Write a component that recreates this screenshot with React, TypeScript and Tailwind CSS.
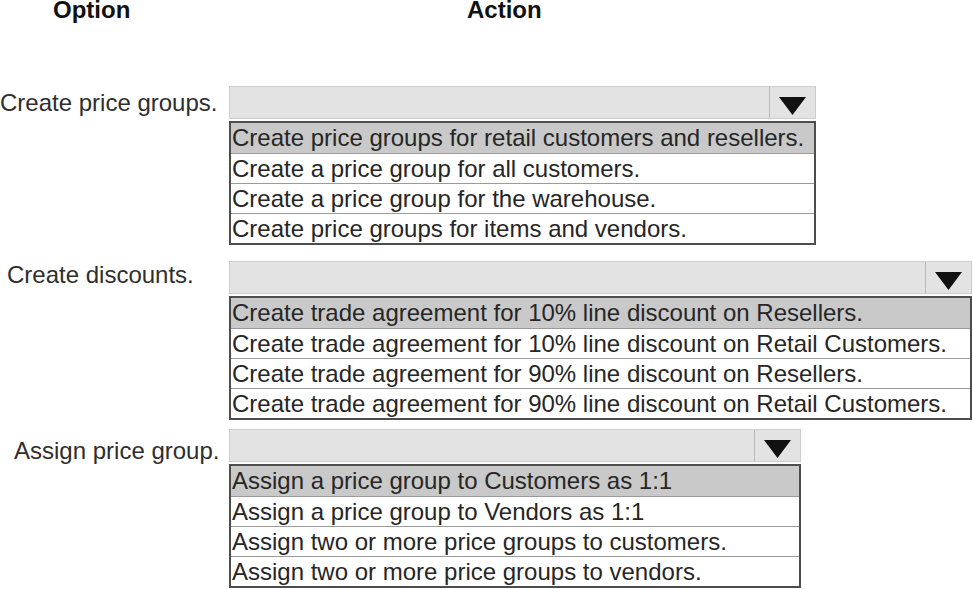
import React from "react";

type Group = {
  label: string;
  labelClass: string;
  boxClass: string;
  wrapClass: string;
  items: string[];
};

const groups: Group[] = [
  {
    label: "Create price groups.",
    labelClass: "pl-0 pt-0",
    boxClass: "w-[587px]",
    wrapClass: "mt-[66px]",
    items: [
      "Create price groups for retail customers and resellers.",
      "Create a price group for all customers.",
      "Create a price group for the warehouse.",
      "Create price groups for items and vendors.",
    ],
  },
  {
    label: "Create discounts.",
    labelClass: "pl-[7px] -mt-[3px]",
    boxClass: "w-[743px]",
    wrapClass: "mt-[16px]",
    items: [
      "Create trade agreement for 10% line discount on Resellers.",
      "Create trade agreement for 10% line discount on Retail Customers.",
      "Create trade agreement for 90% line discount on Resellers.",
      "Create trade agreement for 90% line discount on Retail Customers.",
    ],
  },
  {
    label: "Assign price group.",
    labelClass: "pl-[14px] pt-[5px]",
    boxClass: "w-[572px]",
    wrapClass: "mt-[9px]",
    items: [
      "Assign a price group to Customers as 1:1",
      "Assign a price group to Vendors as 1:1",
      "Assign two or more price groups to customers.",
      "Assign two or more price groups to vendors.",
    ],
  },
];

const Arrow: React.FC = () => (
  <svg width="27" height="18" viewBox="0 0 27 18">
    <polygon points="0,0 27,0 13.5,18" fill="#111" />
  </svg>
);

const Dropdown: React.FC<{ group: Group }> = ({ group }) => (
  <div className={`flex ${group.wrapClass}`}>
    <div
      className={`w-[229px] flex-shrink-0 text-[24px] leading-[33px] text-[#2e2e2e] whitespace-nowrap ${group.labelClass}`}
    >
      {group.label}
    </div>
    <div className={`flex flex-col ${group.boxClass}`}>
      {/* closed select */}
      <div className="flex h-[33px] bg-[#e3e3e3] border border-[#cdcdcd]">
        <div className="flex-1" />
        <div className="w-[46px] border-l border-[#b9b9b9] flex items-center justify-center pt-[6px]">
          <Arrow />
        </div>
      </div>
      {/* open list */}
      <div className="mt-[2px] border-2 border-[#4d4d4d] bg-white">
        {group.items.map((item, i) => (
          <div
            key={item}
            className={`h-[30px] pl-[1px] text-[24px] leading-[29px] text-[#262626] whitespace-nowrap overflow-hidden ${
              i === 0 ? "bg-[#c9c9c9]" : "border-t border-[#9a9a9a]"
            }`}
          >
            {item}
          </div>
        ))}
      </div>
    </div>
  </div>
);

export default function App() {
  return (
    <div
      className="w-[973px] h-[589px] overflow-hidden bg-white"
      style={{ fontFamily: '"Liberation Sans", Arial, sans-serif' }}
    >
      <div className="flex text-[24px] leading-[20px] font-bold text-[#111]">
        <div className="w-[229px] pl-[53px]">Option</div>
        <div className="pl-[238px]">Action</div>
      </div>
      {groups.map((g) => (
        <Dropdown key={g.label} group={g} />
      ))}
    </div>
  );
}
